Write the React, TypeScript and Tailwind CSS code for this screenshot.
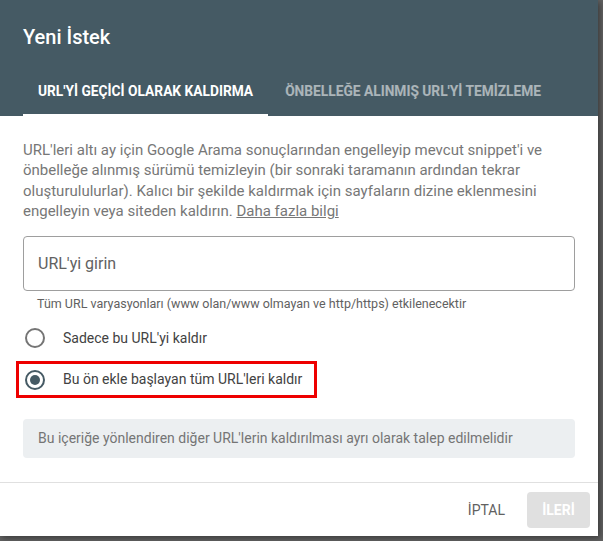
import { useState } from "react"

type Mode = "url" | "prefix"

function Radio({ checked }: { checked: boolean }) {
  return (
    <span
      className={`flex h-5 w-5 shrink-0 items-center justify-center rounded-full border-2 ${
        checked ? "border-[#455a64]" : "border-[#757575]"
      }`}
    >
      {checked && <span className="h-[10px] w-[10px] rounded-full bg-[#455a64]" />}
    </span>
  )
}

export default function App() {
  const [tab, setTab] = useState(0)
  const [mode, setMode] = useState<Mode>("prefix")
  const [url, setUrl] = useState("")

  const tabs = ["URL'Yİ GEÇİCİ OLARAK KALDIRMA", "ÖNBELLEĞE ALINMIŞ URL'Yİ TEMİZLEME"]

  return (
    <div className="min-h-screen bg-[#616161] font-['Roboto','Liberation_Sans',sans-serif]">
      <div className="flex h-[536px] w-[598px] flex-col bg-white shadow-[2px_2px_6px_rgba(0,0,0,0.4)]">
        {/* Header with title and tabs */}
        <div className="bg-[#455a64] px-[23px] pt-[23px]">
          <h1 className="text-[20px] leading-7 font-medium text-white">Yeni İstek</h1>
          <div className="mt-[17px] flex h-[48px] gap-[2px]">
            {tabs.map((label, i) => (
              <button
                key={label}
                onClick={() => setTab(i)}
                className={`flex h-full items-center border-b-2 px-[15px] text-[13.75px] font-bold ${
                  tab === i ? "border-white text-white" : "border-transparent text-white/55"
                }`}
              >
                {label}
              </button>
            ))}
          </div>
        </div>

        {/* Body */}
        <div className="flex flex-col px-[23px] pt-6 pb-6">
          <p className="text-[15px] leading-[20.3px] text-[#777777]">
            URL'leri altı ay için Google Arama sonuçlarından engelleyip mevcut snippet'i ve
            <br />
            önbelleğe alınmış sürümü temizleyin (bir sonraki taramanın ardından tekrar
            <br />
            oluşturululurlar). Kalıcı bir şekilde kaldırmak için sayfaların dizine eklenmesini
            <br />
            engelleyin veya siteden kaldırın.{" "}
            <a href="#" className="underline">
              Daha fazla bilgi
            </a>
          </p>

          <input
            value={url}
            onChange={(e) => setUrl(e.target.value)}
            placeholder="URL'yi girin"
            className="mt-[15px] h-[55px] w-full rounded-[4px] border border-[#9e9e9e] px-[14px] text-[16px] text-[#212121] outline-none placeholder:text-[#616161]"
          />
          <p className="mt-[5px] pl-[14px] text-[12.5px] leading-4 text-[#616161]">
            Tüm URL varyasyonları (www olan/www olmayan ve http/https) etkilenecektir
          </p>

          <button
            onClick={() => setMode("url")}
            className="mt-[6px] flex h-10 items-center gap-[18px] pl-[2px] text-left"
          >
            <Radio checked={mode === "url"} />
            <span className="text-[14px] text-[#424242]">Sadece bu URL'yi kaldır</span>
          </button>

          {/* highlighted option */}
          <button
            onClick={() => setMode("prefix")}
            className="mt-[3px] -ml-[7px] flex h-[37px] w-[301px] items-center gap-[18px] border-[3px] border-[#ee0000] pl-[6px] text-left"
          >
            <Radio checked={mode === "prefix"} />
            <span className="text-[14px] text-[#424242]">Bu ön ekle başlayan tüm URL'leri kaldır</span>
          </button>

          <div className="mt-[21px] flex h-[39px] items-center rounded-[4px] bg-[#eceff1] px-[15px] text-[14px] text-[#757575]">
            Bu içeriğe yönlendiren diğer URL'lerin kaldırılması ayrı olarak talep edilmelidir
          </div>
        </div>

        {/* Footer */}
        <div className="flex items-center justify-end gap-[6px] border-t border-[#e0e0e0] pt-[9px] pr-[8px]">
          <button className="h-9 rounded-[4px] px-4 text-[14px] text-[#616161]">İPTAL</button>
          <button
            disabled
            className="h-9 w-[63px] rounded-[4px] bg-[#e0e0e0] text-[14px] font-bold text-white"
          >
            İLERİ
          </button>
        </div>
      </div>
    </div>
  )
}
